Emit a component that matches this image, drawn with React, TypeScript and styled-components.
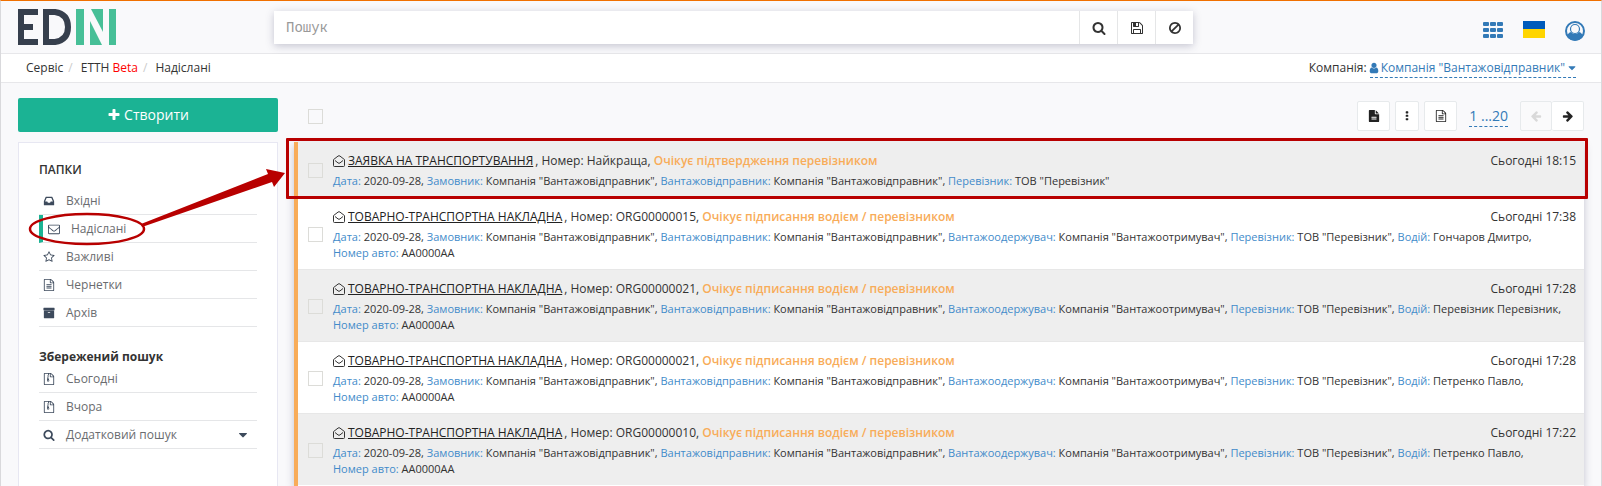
import React from "react";
import styled, { createGlobalStyle, css } from "styled-components";

const GlobalStyle = createGlobalStyle`
  *, *::before, *::after { box-sizing: border-box; }
  body {
    margin: 0;
    background: #f9f9fb;
    color: #333;
    font: 12px/18px "Open Sans", "Noto Sans", sans-serif;
  }
  a { color: inherit; text-decoration: none; }
  button { font: inherit; cursor: pointer; }
`;

const colors = {
  blue: "#337ab7",
  green: "#1bb394",
  orange: "#f8ac59",
  red: "#b80000",
  line: "#e7e7ea",
  slate: "#3d4a5c",
};

/* ---------- icons ---------- */

const paths = {
  search:
    "M1216 832q0-185-131.5-316.5t-316.5-131.5-316.5 131.5-131.5 316.5 131.5 316.5 316.5 131.5 316.5-131.5 131.5-316.5zm512 832q0 52-38 90t-90 38q-54 0-90-38l-343-342q-179 124-399 124-143 0-273.5-55.5t-225-150-150-225-55.5-273.5 55.5-273.5 150-225 225-150 273.5-55.5 273.5 55.5 225 150 150 225 55.5 273.5q0 220-124 399l343 343q37 37 37 90z",
  save:
    "M512 1536h768v-384h-768v384zm896 0h128v-896q0-14-10-38.5t-20-34.5l-281-281q-10-10-34-20t-39-10v416q0 40-28 68t-68 28h-576q-40 0-68-28t-28-68v-416h-128v1280h128v-416q0-40 28-68t68-28h832q40 0 68 28t28 68v416zm-384-928v-320q0-13-9.5-22.5t-22.5-9.5h-192q-13 0-22.5 9.5t-9.5 22.5v320q0 13 9.5 22.5t22.5 9.5h192q13 0 22.5-9.5t9.5-22.5zm640 32v928q0 40-28 68t-68 28h-1344q-40 0-68-28t-28-68v-1344q0-40 28-68t68-28h928q40 0 88 20t76 48l280 280q28 28 48 76t20 88z",
  ban:
    "M1440 893q0-161-87-295l-754 753q137 89 297 89 111 0 211.5-43.5t173.5-116.5 116-174.5 43-212.5zm-999 299l755-754q-135-91-300-91-148 0-273 73t-198 199-73 274q0 162 89 299zm1223-299q0 157-61 300t-163.5 246-245 164-298.5 61-298.5-61-245-164-163.5-246-61-300 61-299.5 163.5-245.5 245-164 298.5-61 298.5 61 245 164 163.5 245.5 61 299.5z",
  plus:
    "M1600 736v192q0 40-28 68t-68 28h-416v416q0 40-28 68t-68 28h-192q-40 0-68-28t-28-68v-416h-416q-40 0-68-28t-28-68v-192q0-40 28-68t68-28h416v-416q0-40 28-68t68-28h192q40 0 68 28t28 68v416h416q40 0 68 28t28 68z",
  caret:
    "M1408 704q0 26-19 45l-448 448q-19 19-45 19t-45-19l-448-448q-19-19-19-45t19-45 45-19h896q26 0 45 19t19 45z",
  star:
    "M1201 1004l306-297-422-62-189-382-189 382-422 62 306 297-73 421 378-199 377 199zm527-357q0 22-26 48l-363 354 86 500q1 7 1 20 0 50-41 50-19 0-40-12l-449-236-449 236q-22 12-40 12-21 0-31.5-14.5t-10.5-35.5q0-6 2-20l86-500-364-354q-25-27-25-48 0-37 56-46l502-73 225-455q19-41 49-41t49 41l225 455 502 73q56 9 56 46z",
  envelope:
    "M1664 1504v-768q-32 36-69 66-268 206-426 338-51 43-83 67t-86.5 48.5-102.5 24.5h-2q-48 0-102.5-24.5t-86.5-48.5-83-67q-158-132-426-338-37-30-69-66v768q0 13 9.5 22.5t22.5 9.5h1472q13 0 22.5-9.5t9.5-22.5zm0-1051v-24.5l-.5-13-3-12.5-5.5-9-9-7.5-14-2.5h-1472q-13 0-22.5 9.5t-9.5 22.5q0 168 147 284 193 152 401 317 6 5 35 29.5t46 37.5 44.5 31.5 50.5 27.5 43 9h2q20 0 43-9t50.5-27.5 44.5-31.5 46-37.5 35-29.5q208-165 401-317 54-43 100.5-115.5t46.5-131.5zm128-37v1088q0 66-47 113t-113 47h-1472q-66 0-113-47t-47-113v-1088q0-66 47-113t113-47h1472q66 0 113 47t47 113z",
  fileLines:
    "M1596 380q28 28 48 76t20 88v1152q0 40-28 68t-68 28h-1344q-40 0-68-28t-28-68v-1600q0-40 28-68t68-28h896q40 0 88 20t76 48zm-444-244v376h376q-10-29-22-41l-313-313q-12-12-41-22zm384 1528v-1024h-416q-40 0-68-28t-28-68v-416h-768v1536h1280zm-1024-864q0-14 9-23t23-9h704q14 0 23 9t9 23v64q0 14-9 23t-23 9h-704q-14 0-23-9t-9-23v-64zm736 224q14 0 23 9t9 23v64q0 14-9 23t-23 9h-704q-14 0-23-9t-9-23v-64q0-14 9-23t23-9h704zm0 256q14 0 23 9t9 23v64q0 14-9 23t-23 9h-704q-14 0-23-9t-9-23v-64q0-14 9-23t23-9h704z",
  fileZip:
    "M1596 380q28 28 48 76t20 88v1152q0 40-28 68t-68 28h-1344q-40 0-68-28t-28-68v-1600q0-40 28-68t68-28h896q40 0 88 20t76 48zm-444-244v376h376q-10-29-22-41l-313-313q-12-12-41-22zm384 1528v-1024h-416q-40 0-68-28t-28-68v-416h-128v128h-128v-128h-512v1536h1280zM768 256h128v128h-128zM640 384h128v128h-128zM768 512h128v128h-128zM640 640h128v128h-128zM640 768h192l107 349q21 67-30 115t-141 48-141-48-30-115zM768 1088q-90 0-90 56t90 56 90-56-90-56z",
  fileSolid:
    "M1596 476q14 14 28 36h-472v-472q22 14 36 28zm-476 164h544v1056q0 40-28 68t-68 28h-1344q-40 0-68-28t-28-68v-1600q0-40 28-68t68-28h800v544q0 40 28 68t68 28zm160 736v-64q0-14-9-23t-23-9h-704q-14 0-23 9t-9 23v64q0 14 9 23t23 9h704q14 0 23-9t9-23zm0-256v-64q0-14-9-23t-23-9h-704q-14 0-23 9t-9 23v64q0 14 9 23t23 9h704q14 0 23-9t9-23z",
  archive:
    "M1088 832q0-26-19-45t-45-19h-256q-26 0-45 19t-19 45 19 45 45 19h256q26 0 45-19t19-45zm576-192v960q0 26-19 45t-45 19h-1408q-26 0-45-19t-19-45v-960q0-26 19-45t45-19h1408q26 0 45 19t19 45zm64-448v256q0 26-19 45t-45 19h-1536q-26 0-45-19t-19-45v-256q0-26 19-45t45-19h1536q26 0 45 19t19 45z",
  inbox:
    "M1151 960h316q-1-3-2.5-8t-2.5-8l-212-496h-708l-212 496q-1 2-2.5 8t-2.5 8h316l95 192h320zm513 30v482q0 26-19 45t-45 19h-1408q-26 0-45-19t-19-45v-482q0-62 25-123l238-552q10-25 36.5-42t52.5-17h832q26 0 52.5 17t36.5 42l238 552q25 61 25 123z",
  arrow:
    "M1664 896v128q0 53-32.5 90.5t-84.5 37.5h-704l293 294q38 36 38 90t-38 90l-75 76q-37 37-90 37-52 0-91-37l-651-652q-37-37-37-90 0-52 37-91l651-650q38-38 91-38 52 0 90 38l75 74q38 38 38 91t-38 91l-293 293h704q52 0 84.5 37.5t32.5 90.5z",
  user:
    "M1536 1399q0 109-62.5 187t-150.5 78h-854q-88 0-150.5-78t-62.5-187q0-85 8.5-160.5t31.5-152 58.5-131 94-89 134.5-34.5q131 128 313 128t313-128q76 0 134.5 34.5t94 89 58.5 131 31.5 152 8.5 160.5zm-256-887q0 159-112.5 271.5t-271.5 112.5-271.5-112.5-112.5-271.5 112.5-271.5 271.5-112.5 271.5 112.5 112.5 271.5z",
  dots:
    "M768 192h256q64 0 64 64v192q0 64-64 64h-256q-64 0-64-64v-192q0-64 64-64zM768 704h256q64 0 64 64v192q0 64-64 64h-256q-64 0-64-64v-192q0-64 64-64zM768 1216h256q64 0 64 64v192q0 64-64 64h-256q-64 0-64-64v-192q0-64 64-64z",
};

type IconName = keyof typeof paths;

const IconSvg = styled.svg<{ $flip?: boolean }>`
  flex: none;
  fill: currentColor;
  ${(p) => p.$flip && css`transform: scaleX(-1);`}
`;

function Icon({ name, size = 14, flip }: { name: IconName; size?: number; flip?: boolean }) {
  return (
    <IconSvg width={size} height={size} viewBox="0 0 1792 1792" $flip={flip} aria-hidden="true">
      <path fillRule="evenodd" d={paths[name]} />
    </IconSvg>
  );
}

const OpenEnvelope = styled(({ className }: { className?: string }) => (
  <svg className={className} width="12" height="12" viewBox="0 0 12 12" aria-hidden="true">
    <path d="M.5 4.600 5 1.100Q6 .3 7 1.100l4.500 3.500v6q0 .9-.9.9H1.400q-.9 0-.9-.9z" />
    <path d="M2 5.500 5 7.900q1 .8 2 0l3-2.400" />
  </svg>
))`
  flex: none;
  fill: none;
  stroke: #333;
`;

function Logo() {
  return (
    <svg width="98" height="36" viewBox="0 0 98 36" role="img" aria-label="EDIN">
      <g fill="#363f4d">
        <rect width="6" height="36" />
        <rect width="20" height="6" />
        <rect y="15" width="15" height="6" />
        <rect y="30" width="20" height="6" />
      </g>
      <path d="M28 3h9q13 2 13 15T37 33h-9z" fill="none" stroke="#363f4d" strokeWidth="6" />
      <g fill="#47bf97">
        <rect x="58" width="8" height="36" />
        <path d="M73 0h12v23z" />
        <path d="M72 12 84 36H72z" />
        <rect x="91" width="7" height="36" />
      </g>
    </svg>
  );
}

/* ---------- page frame ---------- */

const Page = styled.div`
  display: flex;
  flex-direction: column;
  min-height: 100vh;
  overflow-x: clip;
  border: solid #d9d9dc;
  border-width: 1px 1px 0;
  border-top-color: #f07000;
`;

const Header = styled.header`
  display: flex;
  height: 53px;
  padding: 8px 16px 0 17px;
  border-bottom: 1px solid ${colors.line};
`;

const Brand = styled.a`
  width: 256px;
`;

const SearchBar = styled.form`
  display: flex;
  flex: 1;
  height: 33px;
  margin-top: 2px;
  background: #fff;
  box-shadow: 0 2px 8px rgba(60, 60, 100, 0.28);
`;

const SearchInput = styled.input`
  flex: 1;
  min-width: 0;
  padding: 0 12px;
  border: 0;
  background: none;
  font: 14px "Liberation Mono", monospace;
  &::placeholder { color: #999; opacity: 1; }
`;

const SearchButton = styled.button`
  display: grid;
  place-items: center;
  width: 38px;
  padding: 0;
  border: 0;
  border-left: 1px solid #e5e6e7;
  background: none;
  color: #333;
`;

const HeaderTools = styled.div`
  display: flex;
  justify-content: flex-end;
  align-items: flex-start;
  gap: 20px;
  width: 392px;
  padding-top: 12px;
`;

const ToolButton = styled.button`
  display: flex;
  padding: 0;
  border: 0;
  background: none;
  color: ${colors.blue};
`;

const SubHeader = styled.div`
  display: flex;
  justify-content: space-between;
  align-items: center;
  height: 29px;
  padding: 0 25px;
  border-bottom: 1px solid ${colors.line};
  background: #fff;
`;

const Crumbs = styled.ol`
  display: flex;
  margin: 0;
  padding: 0;
  list-style: none;
  li + li::before {
    content: "/";
    padding: 0 8px 0 5px;
    color: #ccc;
  }
`;

const Beta = styled.span`
  color: #f00;
`;

const Company = styled.div`
  display: flex;
  gap: 3px;
`;

const DashedLink = styled.a<{ $large?: boolean }>`
  display: flex;
  align-items: center;
  gap: 3px;
  border-bottom: 1px dashed ${colors.blue};
  color: ${colors.blue};
  svg { margin: 0 -2px; }
  ${(p) => p.$large && css`font-size: 14px; line-height: 20px;`}
`;

const Body = styled.div`
  display: flex;
  flex: 1;
  gap: 16px;
  padding: 15px 17px 0;
`;

/* ---------- sidebar ---------- */

const Sidebar = styled.aside`
  display: flex;
  flex-direction: column;
  gap: 10px;
  width: 260px;
`;

const CreateButton = styled.button`
  display: flex;
  justify-content: center;
  align-items: center;
  gap: 3px;
  height: 34px;
  border: 0;
  border-radius: 2px;
  background: ${colors.green};
  color: #fff;
  font-size: 14px;
`;

const FolderPanel = styled.nav`
  flex: 1;
  padding: 19px 20px;
  border: 1px solid #e7e7f2;
  border-bottom: 0;
  background: #fff;
`;

const PanelTitle = styled.h2<{ $bold?: boolean }>`
  margin: 0;
  font-size: 12px;
  line-height: 16px;
  font-weight: ${(p) => (p.$bold ? 700 : 600)};
`;

const FolderList = styled.ul<{ $spaced?: boolean }>`
  margin: 0;
  padding: 0;
  list-style: none;
  ${(p) => p.$spaced && css`padding: 9px 0 22px;`}
`;

const FolderItem = styled.li`
  position: relative;
`;

const FolderLink = styled.a<{ $active?: boolean }>`
  display: flex;
  align-items: center;
  gap: 11px;
  height: 28px;
  padding-left: 4px;
  border-bottom: 1px solid #e5e6e8;
  color: #6a6c6f;
  svg { color: ${colors.slate}; }
  > svg:nth-of-type(2) { margin: 0 7px 0 auto; }
  ${(p) => p.$active && css`padding-left: 5px; border-left: 4px solid ${colors.green};`}
`;

const Pointer = styled.svg`
  position: absolute;
  top: -6px;
  left: -12px;
  z-index: 3;
  overflow: visible;
  pointer-events: none;
`;

/* ---------- documents ---------- */

const Main = styled.main`
  display: flex;
  flex: 1;
  flex-direction: column;
  min-width: 0;
`;

const Toolbar = styled.div`
  display: flex;
  align-items: center;
  gap: 5px;
  height: 44px;
  padding: 0 0 8px 14px;
`;

const Checkbox = styled.input.attrs({ type: "checkbox" })`
  flex: none;
  appearance: none;
  width: 15px;
  height: 15px;
  margin: 0;
  border: 1px solid #dcdcd8;
`;

const SquareButton = styled.button<{ $narrow?: boolean }>`
  display: grid;
  place-items: center;
  width: ${(p) => (p.$narrow ? 24 : 33)}px;
  height: 30px;
  padding: 0;
  border: 1px solid #e7eaec;
  border-radius: 2px;
  background: #fff;
  color: #222;
  &:disabled { background: #fafafb; color: #d9d9d9; }
`;

const PageRange = styled.div`
  padding: 0 7px;
`;

const Pager = styled.div`
  display: flex;
  button { width: 32px; }
  button + button { border-left: 0; }
`;

const Spacer = styled.div`
  flex: 1;
`;

const DocumentList = styled.ul`
  flex: 1;
  margin: 0;
  padding: 0;
  border-left: 4px solid ${colors.orange};
  list-style: none;
  background: #fff;
  box-shadow: 0 3px 8px rgba(60, 60, 100, 0.28);
`;

const DocumentRow = styled.li`
  position: relative;
  display: flex;
  gap: 10px;
  padding: 10px 8px 8px 10px;
  border-bottom: 1px solid #e7e7e7;
  &:nth-child(odd) { background: #eee; }
  &:last-child { border-bottom: 0; }
  > input { align-self: center; }
`;

const Highlight = styled.div`
  position: absolute;
  inset: -4px -4px -2px -12px;
  z-index: 2;
  border: 3px solid ${colors.red};
  border-radius: 1px;
  pointer-events: none;
`;

const DocumentText = styled.div`
  flex: 1;
  min-width: 0;
`;

const TitleLine = styled.div`
  display: flex;
  align-items: center;
  height: 18px;
  gap: 3px;
  margin-bottom: 3px;
`;

const TitleLink = styled.a`
  margin-right: 2px;
  color: #222;
  text-decoration: underline;
`;

const Status = styled.span`
  color: ${colors.orange};
  font-weight: 600;
`;

const Time = styled.time`
  margin-left: auto;
`;

const Details = styled.div`
  font-size: 11px;
  line-height: 16px;
`;

const Field = styled.span`
  white-space: nowrap;
`;

const FieldName = styled.span`
  color: #428bca;
`;

type Doc = { title: string; number: string; status: string; time: string; fields: [string, string][] };

const sender = 'Компанія "Вантажовідправник"';

const waybill = (number: string, time: string, driver: string): Doc => ({
  title: "ТОВАРНО-ТРАНСПОРТНА НАКЛАДНА",
  number,
  status: "Очікує підписання водієм / перевізником",
  time,
  fields: [
    ["Дата", "2020-09-28"],
    ["Замовник", sender],
    ["Вантажовідправник", sender],
    ["Вантажоодержувач", 'Компанія "Вантажоотримувач"'],
    ["Перевізник", 'ТОВ "Перевізник"'],
    ["Водій", driver],
    ["Номер авто", "АА0000АА"],
  ],
});

const documents: Doc[] = [
  {
    title: "ЗАЯВКА НА ТРАНСПОРТУВАННЯ",
    number: "Найкраща",
    status: "Очікує підтвердження перевізником",
    time: "18:15",
    fields: [
      ["Дата", "2020-09-28"],
      ["Замовник", sender],
      ["Вантажовідправник", sender],
      ["Перевізник", 'ТОВ "Перевізник"'],
    ],
  },
  waybill("ORG00000015", "17:38", "Гончаров Дмитро"),
  waybill("ORG00000021", "17:28", "Перевізник Перевізник"),
  waybill("ORG00000021", "17:28", "Петренко Павло"),
  waybill("ORG00000010", "17:22", "Петренко Павло"),
];

const folders: { icon: IconName; label: string; active?: boolean }[] = [
  { icon: "inbox", label: "Вхідні" },
  { icon: "envelope", label: "Надіслані", active: true },
  { icon: "star", label: "Важливі" },
  { icon: "fileLines", label: "Чернетки" },
  { icon: "archive", label: "Архів" },
];

const savedSearches: { icon: IconName; label: string; menu?: boolean }[] = [
  { icon: "fileZip", label: "Сьогодні" },
  { icon: "fileZip", label: "Вчора" },
  { icon: "search", label: "Додатковий пошук", menu: true },
];

export default function App() {
  return (
    <Page>
      <GlobalStyle />
      <Header>
        <Brand href="#"><Logo /></Brand>
        <SearchBar role="search">
          <SearchInput aria-label="Пошук" placeholder="Пошук" />
          <SearchButton type="button" aria-label="Шукати"><Icon name="search" /></SearchButton>
          <SearchButton type="button" aria-label="Зберегти"><Icon name="save" /></SearchButton>
          <SearchButton type="button" aria-label="Очистити"><Icon name="ban" /></SearchButton>
        </SearchBar>
        <HeaderTools>
          <ToolButton aria-label="Сервіси">
            <svg width="20" height="18" viewBox="0 0 20 18" fill="currentColor">
              {[0, 7, 14].map((x) =>
                [1, 7, 13].map((y) => <rect key={`${x}-${y}`} x={x} y={y} width="6" height="4" rx="1" />)
              )}
            </svg>
          </ToolButton>
          <ToolButton aria-label="Українська">
            <svg width="22" height="17" viewBox="0 0 22 17">
              <rect width="22" height="8" fill="#005bbb" />
              <rect y="8" width="22" height="9" fill="#ffd500" />
            </svg>
          </ToolButton>
          <ToolButton aria-label="Профіль">
            <svg width="20" height="20" viewBox="0 0 20 20">
              <circle cx="10" cy="10" r="9" fill="none" stroke="currentColor" strokeWidth="2" />
              <path fill="currentColor" d="M2 15.500q1-4 4-4.500 1.500 2 4 2t4-2q3 .5 4 4.500-3 4-8 4t-8-4z" />
              <circle cx="10" cy="8" r="4.500" fill="#f9f9fb" stroke="currentColor" strokeWidth="1.200" />
            </svg>
          </ToolButton>
        </HeaderTools>
      </Header>

      <SubHeader>
        <Crumbs>
          <li><a href="#">Сервіс</a></li>
          <li><a href="#">ЕТТН <Beta>Beta</Beta></a></li>
          <li>Надіслані</li>
        </Crumbs>
        <Company>
          Компанія:
          <DashedLink href="#">
            <Icon name="user" size={12} />
            {sender}
            <Icon name="caret" size={12} />
          </DashedLink>
        </Company>
      </SubHeader>

      <Body>
        <Sidebar>
          <CreateButton><Icon name="plus" />Створити</CreateButton>
          <FolderPanel>
            <PanelTitle>ПАПКИ</PanelTitle>
            <FolderList $spaced>
              {folders.map((f) => (
                <FolderItem key={f.label}>
                  <FolderLink href="#" $active={f.active}><Icon name={f.icon} size={12} />{f.label}</FolderLink>
                  {f.active && (
                    <Pointer width="120" height="40" viewBox="0 0 120 40" aria-hidden="true">
                      <ellipse cx="60" cy="20" rx="57" ry="15" fill="none" stroke={colors.red} strokeWidth="2.500" />
                      <path fill={colors.red} d="M114 15 241 -35 239 -40 258 -36 247 -22 245 -27 115 18z" />
                    </Pointer>
                  )}
                </FolderItem>
              ))}
            </FolderList>
            <PanelTitle $bold>Збережений пошук</PanelTitle>
            <FolderList>
              {savedSearches.map((s) => (
                <FolderItem key={s.label}>
                  <FolderLink href="#">
                    <Icon name={s.icon} size={12} />
                    {s.label}
                    {s.menu && <Icon name="caret" />}
                  </FolderLink>
                </FolderItem>
              ))}
            </FolderList>
          </FolderPanel>
        </Sidebar>

        <Main>
          <Toolbar>
            <Checkbox aria-label="Вибрати всі" />
            <Spacer />
            <SquareButton aria-label="Документ"><Icon name="fileSolid" size={12} /></SquareButton>
            <SquareButton $narrow aria-label="Ще"><Icon name="dots" size={12} /></SquareButton>
            <SquareButton aria-label="Реєстр"><Icon name="fileLines" size={12} /></SquareButton>
            <PageRange><DashedLink href="#" $large>1 ...20</DashedLink></PageRange>
            <Pager>
              <SquareButton disabled aria-label="Назад"><Icon name="arrow" size={12} /></SquareButton>
              <SquareButton aria-label="Вперед"><Icon name="arrow" size={12} flip /></SquareButton>
            </Pager>
          </Toolbar>
          <DocumentList>
            {documents.map((d, i) => (
              <DocumentRow key={i}>
                <Checkbox aria-label={`${d.title} ${d.number}`} />
                <DocumentText>
                  <TitleLine>
                    <OpenEnvelope />
                    <span>
                      <TitleLink href="#">{d.title}</TitleLink>, Номер: {d.number}, <Status>{d.status}</Status>
                    </span>
                    <Time>Сьогодні {d.time}</Time>
                  </TitleLine>
                  <Details>
                    {d.fields.map(([name, value], n) => (
                      <React.Fragment key={name}>
                        <Field>
                          <FieldName>{name}:</FieldName> {value}
                          {n < d.fields.length - 1 && ","}
                        </Field>{" "}
                      </React.Fragment>
                    ))}
                  </Details>
                </DocumentText>
                {i === 0 && <Highlight />}
              </DocumentRow>
            ))}
          </DocumentList>
        </Main>
      </Body>
    </Page>
  );
}
